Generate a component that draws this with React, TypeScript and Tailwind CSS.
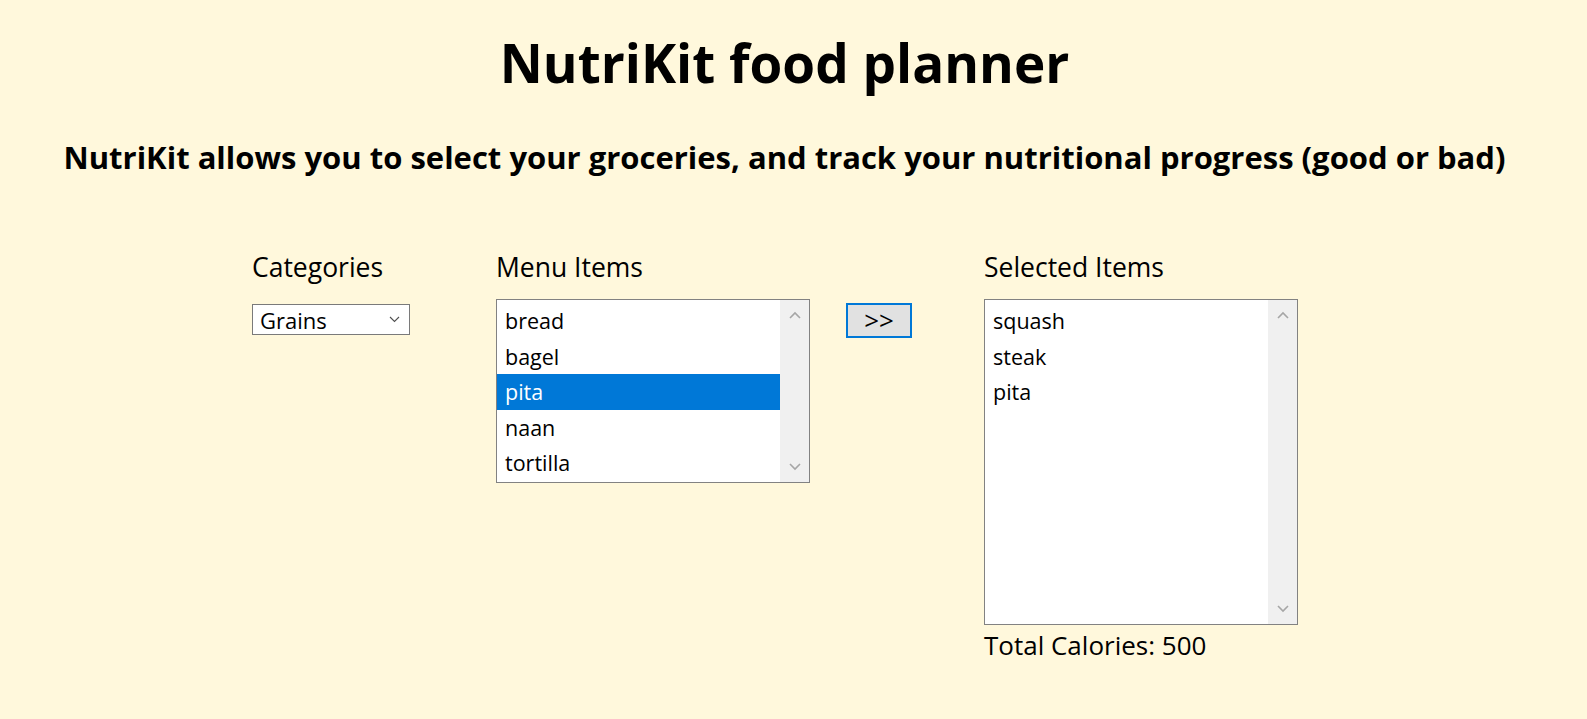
import React from "react";

const font = { fontFamily: '"Open Sans", "Noto Sans", sans-serif' };

function Chevron({ dir }: { dir: "up" | "down" }) {
  return (
    <svg width="12" height="8" viewBox="0 0 12 8">
      {dir === "up" ? (
        <path d="M1 7 L6 2 L11 7" fill="none" stroke="#a6a6a6" strokeWidth="1.6" />
      ) : (
        <path d="M1 1 L6 6 L11 1" fill="none" stroke="#a6a6a6" strokeWidth="1.6" />
      )}
    </svg>
  );
}

function ListBox({ items, selected, height }: { items: string[]; selected?: number; height: string }) {
  return (
    <div className={`flex w-[314px] ${height} border border-[#828282] bg-white`}>
      <div className="flex flex-1 flex-col pt-[3px]">
        {items.map((it, i) => (
          <div
            key={it}
            className={`h-[35.5px] pl-[8px] text-[21.5px] leading-[35.5px] ${
              i === selected ? "bg-[#0078d7] text-white" : "text-black"
            }`}
          >
            {it}
          </div>
        ))}
      </div>
      <div className="flex w-[29px] flex-col items-center justify-between bg-[#f0f0f0] py-[11px]">
        <Chevron dir="up" />
        <Chevron dir="down" />
      </div>
    </div>
  );
}

export default function App() {
  return (
    <div className="min-h-[719px] w-full bg-[#fff8dc] text-black" style={font}>
      <div className="pr-[18px]">
        <h1 className="pt-[23px] text-center text-[53px] font-bold leading-[80px]">NutriKit food planner</h1>
        <h3 className="mt-[32px] text-center text-[31px] font-bold leading-[44px]">
          NutriKit allows you to select your groceries, and track your nutritional progress (good or bad)
        </h3>
      </div>
      <div className="mt-[71px] flex pl-[252px]">
        <div className="w-[244px]">
          <div className="text-[26.5px] leading-[34px]">Categories</div>
          <div className="mt-[20px] flex h-[31px] w-[158px] items-center justify-between border border-[#7a7a7a] bg-white pl-[7px] pr-[9px]">
            <span className="text-[22px] leading-[28px]">Grains</span>
            <svg width="11" height="7" viewBox="0 0 11 7">
              <path d="M1 1 L5.5 5.5 L10 1" fill="none" stroke="#505050" strokeWidth="1.1" />
            </svg>
          </div>
        </div>
        <div className="w-[350px]">
          <div className="text-[26.5px] leading-[34px]">Menu Items</div>
          <div className="mt-[15px]">
            <ListBox items={["bread", "bagel", "pita", "naan", "tortilla"]} selected={2} height="h-[184px]" />
          </div>
        </div>
        <div className="w-[138px]">
          <div className="h-[34px]" />
          <button className="mt-[19px] flex h-[35px] w-[66px] items-center justify-center border-2 border-[#0078d7] bg-[#e1e1e1] pb-[2px] text-[26px] leading-none">
            &gt;&gt;
          </button>
        </div>
        <div>
          <div className="text-[26.5px] leading-[34px]">Selected Items</div>
          <div className="mt-[15px]">
            <ListBox items={["squash", "steak", "pita"]} height="h-[326px]" />
          </div>
          <div className="mt-[2px] text-[26px] leading-[36px]">Total Calories: 500</div>
        </div>
      </div>
    </div>
  );
}
